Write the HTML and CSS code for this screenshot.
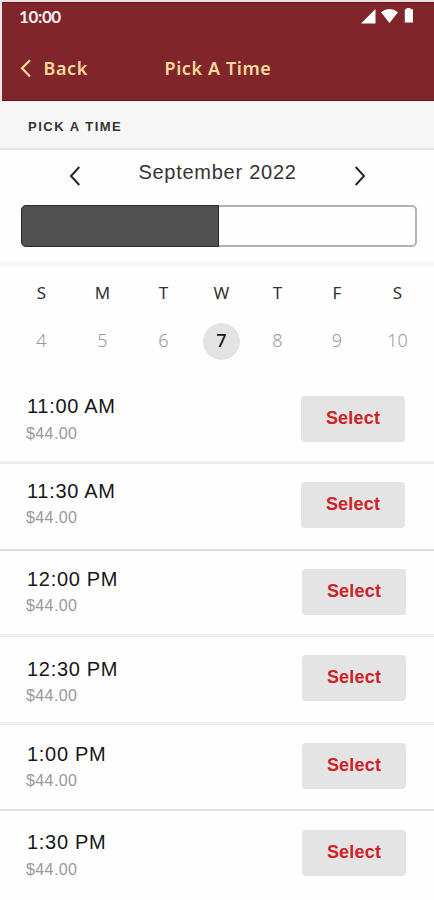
FILE: index.html
```html
<!DOCTYPE html>
<html lang="en">
<head>
<meta charset="utf-8">
<title>Pick A Time</title>
<link rel="stylesheet" href="styles.css">
</head>
<body>
<header class="header">
  <div class="status">
    <span class="clock">10:00</span>
    <svg class="status-icons" width="54" height="16" viewBox="0 0 54 16" fill="#fff"><path d="M1 15.5L15.5 1v14.5z"/><path d="M21 4.2Q29.5-2 38 4.2L29.5 15z"/><path d="M46.5 1.3V0h4v1.3H53V14.5H44.8V1.3z"/></svg>
  </div>
  <div class="nav">
    <svg class="back-icon" width="12" height="19" viewBox="0 0 12 19"><path d="M10 1.2L2 9.3l8 8.2"/></svg>
    <span class="back">Back</span>
    <span class="title">Pick A Time</span>
  </div>
</header>
<div class="section-title">PICK A TIME</div>
<section class="month-panel">
  <div class="month">
    <svg class="arrow" width="12" height="20" viewBox="0 0 12 20"><path d="M10.3 1L2 10l8.3 9"/></svg>
    <span class="month-name">September 2022</span>
    <svg class="arrow" width="12" height="20" viewBox="0 0 12 20"><path d="M1.7 1L10 10l-8.3 9"/></svg>
  </div>
  <div class="toggle"><div class="toggle-on"></div></div>
</section>
<section class="week">
  <span>S</span><span>M</span><span>T</span><span>W</span><span>T</span><span>F</span><span>S</span>
  <b>4</b><b>5</b><b>6</b><b class="selected">7</b><b>8</b><b>9</b><b>10</b>
</section>
<main>
  <div class="slot slot-1"><div class="info"><div class="time">11:00 AM</div><div class="price">$44.00</div></div><button class="select">Select</button></div>
  <div class="slot slot-2"><div class="info"><div class="time">11:30 AM</div><div class="price">$44.00</div></div><button class="select">Select</button></div>
  <div class="slot slot-3"><div class="info"><div class="time">12:00 PM</div><div class="price">$44.00</div></div><button class="select">Select</button></div>
  <div class="slot slot-4"><div class="info"><div class="time">12:30 PM</div><div class="price">$44.00</div></div><button class="select">Select</button></div>
  <div class="slot slot-5"><div class="info"><div class="time">1:00 PM</div><div class="price">$44.00</div></div><button class="select">Select</button></div>
  <div class="slot slot-6"><div class="info"><div class="time">1:30 PM</div><div class="price">$44.00</div></div><button class="select">Select</button></div>
</main>
</body>
</html>
```
FILE: styles.css
```css
* { box-sizing: border-box; }
body {
  margin: 0;
  width: 434px;
  height: 900px;
  overflow: hidden;
  background: #fefefe;
  font-family: "Liberation Sans", Arial, sans-serif;
}
svg { display: block; flex: none; }
.header {
  height: 101px;
  border-top: 2px solid #e6e2e2;
  border-left: 2px solid #efe9e9;
  background: #80252a;
  box-shadow: inset 0 1px #6d1016, inset 0 -1px #6d1016;
}
.status {
  display: flex;
  justify-content: space-between;
  height: 30px;
  padding: 5px 20px 0 17px;
}
.clock {
  font: bold 17px/20px Lato, sans-serif;
  letter-spacing: -.4px;
  color: #fbeeee;
}
.status-icons { margin-top: 1px; }
.nav {
  display: flex;
  padding: 23px 0 0 18px;
  font: 600 18px/26px "Noto Sans", sans-serif;
  letter-spacing: .6px;
  color: #f8d99b;
}
.back-icon { margin-top: 4px; fill: none; stroke: #f8d99b; stroke-width: 2.2; }
.back { width: 121px; margin-left: 11.5px; }
.section-title {
  height: 49px;
  padding: 1px 0 0 28px;
  border-bottom: 2px solid #e5e5e5;
  background: #f6f6f6;
  color: #333;
  font-size: 13px;
  font-weight: bold;
  line-height: 49px;
  letter-spacing: 1.5px;
}
.month-panel {
  height: 116px;
  padding: 8px 17px 0 21px;
  border-bottom: 4px solid #f6f6f6;
}
.month {
  display: flex;
  justify-content: space-between;
  height: 47px;
  padding: 0 51px 0 48px;
}
.arrow { margin-top: 8px; fill: none; stroke: #282828; stroke-width: 2; }
.month-name {
  font-size: 20px;
  line-height: 29px;
  letter-spacing: .74px;
  color: #333;
}
.toggle {
  height: 42px;
  border: 2px solid #b3b3b3;
  border-radius: 5px;
}
.toggle-on {
  width: 198px;
  height: 42px;
  margin: -2px;
  border: 1.5px solid #2b2b2b;
  border-radius: 5px 0 0 5px;
  background: #505050;
}
.week {
  display: grid;
  grid-template-columns: 61px 61px 61px 55px 57px 62px 59px;
  grid-template-rows: 30px 37px;
  row-gap: 15px;
  height: 110px;
  padding: 12px 0 0 11px;
  justify-items: center;
  font: 17px/30px "Noto Sans", sans-serif;
  color: #333;
}
.week b { font-weight: 300; line-height: 34px; color: #999; font-size: 18px; }
.week .selected {
  width: 37px;
  height: 37px;
  border-radius: 50%;
  background: #e3e3e3;
  color: #171717;
  text-align: center;
  font-weight: 500;
}
.slot {
  display: flex;
  justify-content: space-between;
  align-items: flex-start;
  padding: 0 28px 0 26px;
  border-bottom: 3px solid #ededed;
}
.time { padding-left: 1px; font-size: 20px; line-height: 24px; letter-spacing: .7px; color: #171717; }
.price { margin-top: 4px; font-size: 16px; line-height: 22px; letter-spacing: .4px; color: #989898; }
.select {
  width: 104px;
  height: 46px;
  padding: 0 0 3px;
  border: 0;
  border-radius: 4px;
  background: #e4e4e4;
  color: #cf2227;
  font: bold 18px/24px "Liberation Sans", Arial, sans-serif;
  letter-spacing: .2px;
}
.slot-1 { height: 88px; padding-right: 29px; }
.slot-1 .info { margin-top: 18px; }
.slot-1 .select { margin-top: 20px; }
.slot-2 { height: 87px; padding-right: 29px; border-bottom: 2px solid #ddd; }
.slot-2 .info { margin-top: 15px; }
.slot-2 .select { margin-top: 18px; }
.slot-3 { height: 86px; }
.slot-3 .info { margin-top: 16px; }
.slot-3 .select { margin-top: 18px; }
.slot-4 { height: 88px; }
.slot-4 .info { margin-top: 20px; }
.slot-4 .select { margin-top: 18px; }
.slot-5 { height: 86px; border-bottom: 2px solid #e0e0e0; }
.slot-5 .info { margin-top: 17px; }
.slot-5 .select { margin-top: 18px; }
.slot-6 { border: 0; }
.slot-6 .info { margin-top: 19px; }
.slot-6 .select { margin-top: 19px; }
.slot-1 .price, .slot-6 .price { margin-top: 5px; }
```
